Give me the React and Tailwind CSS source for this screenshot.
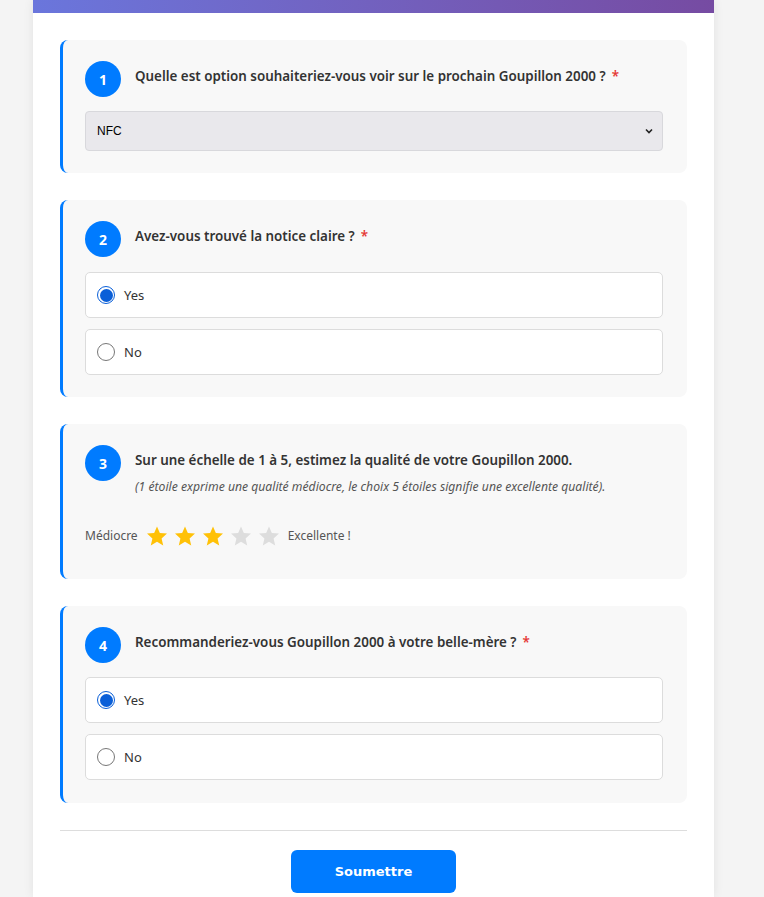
import React from "react";

const font = { fontFamily: '"Noto Sans", "Open Sans", sans-serif' };

function Num({ n }) {
  return (
    <div className="w-[36px] h-[36px] shrink-0 rounded-full bg-[#007bff] text-white flex items-center justify-center text-[14px] font-bold">
      {n}
    </div>
  );
}

function Header({ n, title, required, sub }) {
  return (
    <div className="flex items-start gap-[14px]">
      <Num n={n} />
      <div className="pt-[5px]">
        <div className="text-[13.4px] font-semibold text-[#333] leading-[20px]">
          {title}
          {required && <span className="text-[#e53935] ml-[6px]">*</span>}
        </div>
        {sub && (
          <div className="text-[12.2px] italic text-[#555] mt-[8px] leading-[18px]">{sub}</div>
        )}
      </div>
    </div>
  );
}

function Radio({ label, checked }) {
  return (
    <div className="h-[46px] bg-white border border-[#dcdcdc] rounded-[5px] flex items-center px-[11px] gap-[9px]">
      {checked ? (
        <span className="w-[18px] h-[18px] rounded-full border-[1.5px] border-[#0a5fd8] flex items-center justify-center">
          <span className="w-[13px] h-[13px] rounded-full bg-[#0a5fd8]" />
        </span>
      ) : (
        <span className="w-[18px] h-[18px] rounded-full border border-[#777] bg-white" />
      )}
      <span className="text-[13px] text-[#333] pt-[1px]">{label}</span>
    </div>
  );
}

function Star({ on }) {
  return (
    <svg width="22" height="22" viewBox="0 0 24 24">
      <path
        d="M12 1.5l3.1 7.2 7.8.7-5.9 5.2 1.8 7.7L12 18.3 5.2 22.3l1.8-7.7L1.1 9.4l7.8-.7z"
        fill={on ? "#ffc107" : "#dddddd"}
      />
    </svg>
  );
}

function Card({ children, className = "" }) {
  return (
    <div className={"bg-[#f8f8f8] rounded-[8px] border-l-[3px] border-[#007bff] pl-[22px] pr-[24px] pt-[21px] " + className}>
      {children}
    </div>
  );
}

export default function App() {
  return (
    <div className="min-h-[897px] bg-[#f4f4f4] flex pl-[33px]" style={font}>
      <div className="w-[681px] bg-white shadow-[0_0_10px_rgba(0,0,0,0.08)] h-[897px] overflow-hidden">
        <div className="h-[13px] bg-gradient-to-r from-[#6a76dc] to-[#764ba2]" />
        <div className="px-[27px] pt-[27px] flex flex-col gap-[27px]">
          <Card className="pb-[22px]">
            <Header n="1" title="Quelle est option souhaiteriez-vous voir sur le prochain Goupillon 2000 ?" required />
            <div className="mt-[14px] h-[40px] bg-[#e9e8ec] border border-[#d8d8dc] rounded-[4px] flex items-center justify-between pl-[11px] pr-[8px]">
              <span className="text-[12px] text-black" style={{ fontFamily: '"Liberation Sans", Arial, sans-serif' }}>NFC</span>
              <svg width="10" height="10" viewBox="0 0 10 10">
                <path d="M2 3.5l3 3 3-3" stroke="#222" strokeWidth="1.6" fill="none" />
              </svg>
            </div>
          </Card>
          <Card className="pb-[22px]">
            <Header n="2" title="Avez-vous trouvé la notice claire ?" required />
            <div className="mt-[15px] flex flex-col gap-[11px]">
              <Radio label="Yes" checked />
              <Radio label="No" />
            </div>
          </Card>
          <Card className="pb-[32px]">
            <Header
              n="3"
              title="Sur une échelle de 1 à 5, estimez la qualité de votre Goupillon 2000."
              sub="(1 étoile exprime une qualité médiocre, le choix 5 étoiles signifie une excellente qualité)."
            />
            <div className="mt-[29px] flex items-center gap-[7px] text-[12px] text-[#555]">
              <span className="mr-[1px]">Médiocre</span>
              <div className="flex gap-[6px]">
                <Star on />
                <Star on />
                <Star on />
                <Star />
                <Star />
              </div>
              <span className="ml-[1px]">Excellente !</span>
            </div>
          </Card>
          <Card className="pb-[23px]">
            <Header n="4" title="Recommanderiez-vous Goupillon 2000 à votre belle-mère ?" required />
            <div className="mt-[14px] flex flex-col gap-[11px]">
              <Radio label="Yes" checked />
              <Radio label="No" />
            </div>
          </Card>
          <div className="border-t border-[#dddddd]" />
          <div className="flex justify-center -mt-[8px]">
            <button
              className="w-[165px] h-[43px] rounded-[6px] bg-[#007bff] text-white text-[13px] font-bold"
              style={{ fontFamily: '"DejaVu Sans", Verdana, sans-serif' }}
            >
              Soumettre
            </button>
          </div>
        </div>
      </div>
    </div>
  );
}
